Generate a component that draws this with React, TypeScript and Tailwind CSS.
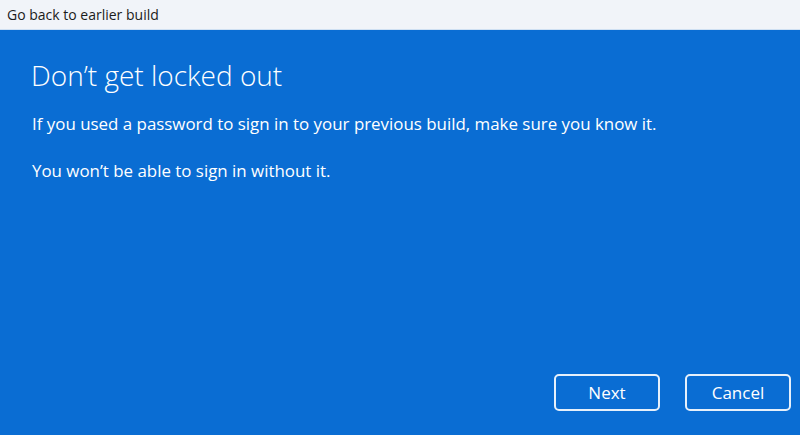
const App = () => {
  return (
    <div
      className="w-[800px] h-[435px] flex flex-col overflow-hidden"
      style={{ fontFamily: '"Open Sans", "Noto Sans", sans-serif' }}
    >
      {/* Title bar */}
      <div className="h-[30px] shrink-0 bg-[#f1f4f9] border-b border-[#cfe0f3] flex items-center px-[7px]">
        <span className="text-[14px] text-[#1b1b1b]">Go back to earlier build</span>
      </div>

      {/* Body */}
      <div className="flex-1 bg-[#0a6dd3] flex flex-col px-[32px] pt-[27px] pb-[24px] text-white">
        <h1 className="text-[28px] font-light leading-[36px] -ml-[1px]">Don’t get locked out</h1>
        <p className="mt-[19px] text-[16.9px] leading-[24px]">
          If you used a password to sign in to your previous build, make sure you know it.
        </p>
        <p className="mt-[23px] text-[16.9px] leading-[24px]">
          You won’t be able to sign in without it.
        </p>

        <div className="mt-auto flex justify-end gap-[25px] -mr-[23px]">
          <button className="w-[106px] h-[37px] rounded-[5px] border-2 border-[#e6f0fb] text-[17px] text-white">
            Next
          </button>
          <button className="w-[106px] h-[37px] rounded-[5px] border-2 border-[#e6f0fb] text-[17px] text-white">
            Cancel
          </button>
        </div>
      </div>
    </div>
  );
};

export default App;
